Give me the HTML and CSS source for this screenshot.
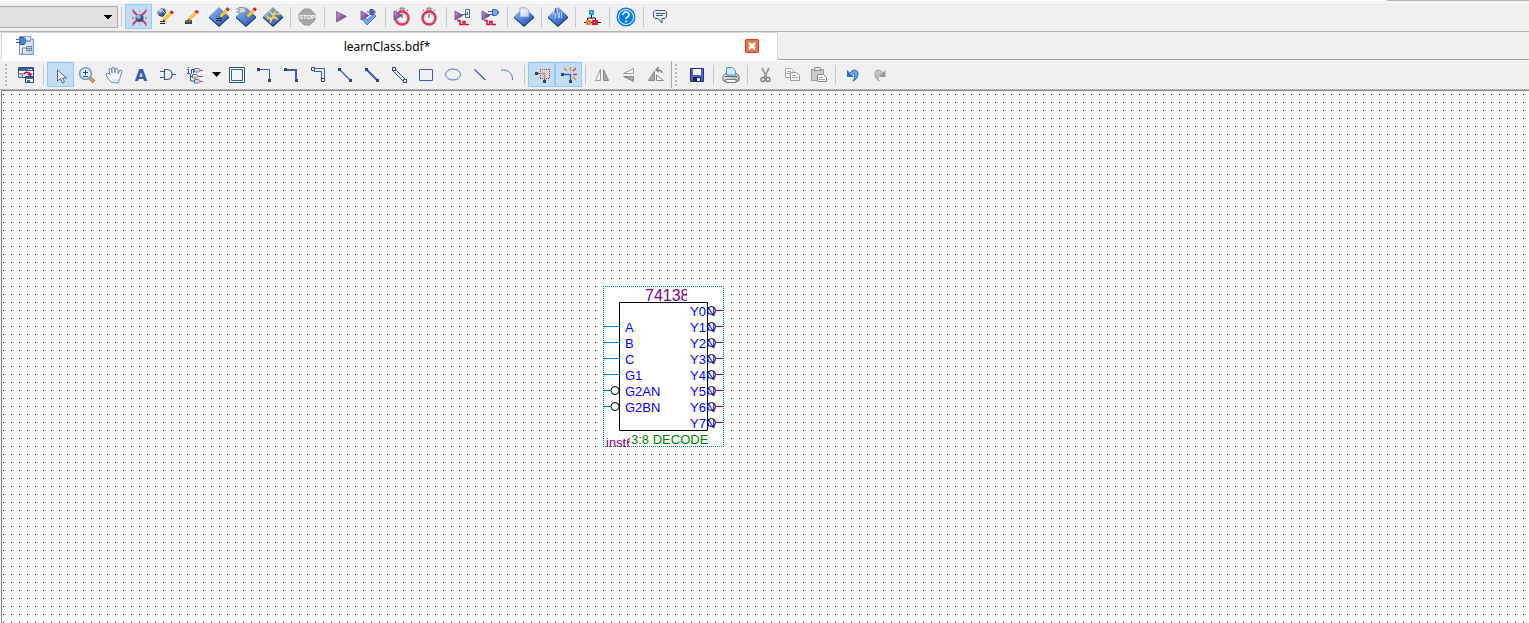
FILE: index.html
```html
<!DOCTYPE html>
<html lang="en">
<head>
<meta charset="utf-8">
<title>learnClass.bdf</title>
<link rel="stylesheet" href="styles.css">
</head>
<body>
<svg class="defs" aria-hidden="true">
  <defs>
    <linearGradient id="blue" x1="0" y1="0" x2="1" y2="1"><stop offset="0" stop-color="#9cc6f8"/><stop offset=".5" stop-color="#5288dc"/><stop offset="1" stop-color="#1f459c"/></linearGradient>
    <linearGradient id="purple" x1="0" y1="0" x2="1" y2="1"><stop offset="0" stop-color="#c9a0dc"/><stop offset="1" stop-color="#5a1a78"/></linearGradient>
    <linearGradient id="paper" x1="0" y1="0" x2="1" y2="1"><stop offset="0" stop-color="#fff"/><stop offset="1" stop-color="#b9cdee"/></linearGradient>
    <linearGradient id="grey" x1="0" y1="0" x2="1" y2="1"><stop offset="0" stop-color="#f4f4f4"/><stop offset="1" stop-color="#a4a4a4"/></linearGradient>
    <radialGradient id="ball" cx=".35" cy=".3"><stop offset="0" stop-color="#c4d8ee"/><stop offset=".6" stop-color="#6585b0"/><stop offset="1" stop-color="#324c74"/></radialGradient>
    <g id="diamond"><path d="M10 2 20 11v1L10 21 0 12v-1z" fill="#1c3474"/><path d="M10 1 20 10.500 10 19.500 0 10.500z" fill="url(#blue)"/></g>
    <g id="pencil"><path d="M0 10l1-3 6-6 2 2-6 6z" fill="#ffc72c" stroke="#d99a10" stroke-width=".4"/><path d="M7 1l1.500-1.500 2 2L9 3z" fill="#e3174d" stroke="#b01040" stroke-width=".7"/><path d="M0 10l.6-2 1.300 1.300z" fill="#333"/></g>
    <path id="play" d="M0 0 8 4.500 0 9z" fill="url(#purple)" stroke="#6b4c85" stroke-width=".8"/>
    <path id="wave" d="M4 14.500h3v4h3v-3h2v3h4" fill="none" stroke="#d3123f" stroke-width="1.500"/>
    <g id="watch"><path d="M8 2h4v3H8z" fill="#c4c4c4" stroke="#8c5a62" stroke-width=".8"/><path d="M4 5l1-1M16 5l-1-1" stroke="#8c5a62"/><circle cx="10" cy="12" r="6.500" fill="#fff" stroke="#e2365c" stroke-width="2.500"/><circle cx="10" cy="12" r="4.300" fill="none" stroke="#888" stroke-dasharray="1 1.400"/><path d="M10 12V8" stroke="#444"/></g>
  </defs>
</svg>
<div class="app">
  <div class="topline"></div>
  <div class="toolbar main" role="toolbar" aria-label="Main">
    <select class="combo" aria-label="Revision"><option></option></select>
    <span class="sep"></span>
    <button class="on" aria-label="Settings"><svg viewBox="0 0 21 21"><path d="M5 5l13 13M18 5 5 18" stroke="#e8325c" stroke-width="2"/><path d="M4 4h2M17 4h2M4 19h2M17 19h2M11 5h1M4 12h2M17 12h2M11 18h1" stroke="#b34468"/><circle cx="11.500" cy="12" r="4" fill="url(#ball)"/></svg></button>
    <button aria-label="Assignment editor"><svg viewBox="0 0 21 21"><path d="M6 2l4 1 1 4-3 4-4-1-2-4z" fill="url(#ball)"/><path d="M2 4h5l3 3" fill="none" stroke="#d4e4f5"/><use href="#pencil" x="8" y="5"/><path d="M5 15.500h5M5 17.500h5" stroke="#222"/></svg></button>
    <button aria-label="Pin planner"><svg viewBox="0 0 21 21"><use href="#pencil" x="6" y="4.500"/><path d="M4 14h6v4H3v-3z" fill="#454545"/><path d="M4 15h5" stroke="#999"/></svg></button>
    <button aria-label="Edit assignments"><svg viewBox="0 0 21 21"><use href="#diamond"/><use href="#pencil" x="10" y="2"/><path d="M7 12.500h6M7 14.500h6" stroke="#102654"/></svg></button>
    <button aria-label="Edit netlist"><svg viewBox="0 0 21 21"><use href="#diamond"/><path d="M0 3h3M0 6h3M3 1.500h4c3.500 0 3.500 5.500 0 5.500H3zM9 4h2" fill="#d8d8d8" stroke="#8b929e"/><use href="#pencil" x="10" y="2"/></svg></button>
    <button aria-label="Chip planner"><svg viewBox="0 0 21 21"><use href="#diamond"/><path d="M6 5l9 9M13 4 7 17M3 9l5 5M8 8h9M4 12h10" stroke="#ffcf45" stroke-width="1.500"/></svg></button>
    <span class="sep"></span>
    <button aria-label="Stop"><svg viewBox="0 0 21 21"><path d="M7 3h6l5 5v6l-5 5H7l-5-5V8z" fill="#a6a6a6" stroke="#999"/><text x="10" y="13" class="stop">STOP</text></svg></button>
    <span class="sep"></span>
    <button aria-label="Start compilation"><svg viewBox="0 0 21 21"><path d="M5.500 5.500 15.500 10.500 5.500 16z" fill="url(#purple)" stroke="#80718e"/></svg></button>
    <button aria-label="Start analysis"><svg viewBox="0 0 21 21"><path d="M4 13l3-2 2 3 7-6 2 2-9 9z" fill="#6fa8f2" stroke="#2d61b7" stroke-width=".8"/><use href="#play" x="3" y="5"/><path d="M9 6h9" stroke="#34528d"/><path d="M12 3.500h3l1 1v3l-1 1h-3z" fill="#4a70b4" stroke="#34528d"/></svg></button>
    <span class="sep"></span>
    <button aria-label="Timing analysis"><svg viewBox="0 0 21 21"><use href="#watch"/><use href="#play" x="2" y="5"/></svg></button>
    <button aria-label="Timing analyzer"><svg viewBox="0 0 21 21"><use href="#watch"/></svg></button>
    <span class="sep"></span>
    <button aria-label="RTL simulation"><svg viewBox="0 0 21 21"><use href="#wave"/><use href="#play" x="2" y="5"/><path d="M12.500 3.500h4v8h-4zM9 8.500h6M14.500 6v3" fill="#eef2f8" stroke="#50617c"/></svg></button>
    <button aria-label="Gate simulation"><svg viewBox="0 0 21 21"><use href="#wave"/><use href="#play" x="2" y="5"/><path d="M8 5.500h4M8 8.500h4M12.500 3.500h2c3 0 4 2 4 3s-1 3-4 3h-2zM17 6.500h2" fill="#79a8ee" stroke="#315ca7"/></svg></button>
    <span class="sep"></span>
    <button aria-label="Programmer"><svg viewBox="0 0 21 21"><use href="#diamond"/><path d="M6 2h6l3 3v6H6z" fill="url(#paper)" stroke="#7f93b2" stroke-width=".7"/></svg></button>
    <span class="sep"></span>
    <button aria-label="Report"><svg viewBox="0 0 21 21"><use href="#diamond"/><path d="M5.500 3v5h2v4M9.500 3v5h1v4M13.500 6v6M11.500 6v6" fill="none" stroke="#c3d8fa" stroke-width=".8"/><path d="M7.500 2v5" stroke="#9d4379"/></svg></button>
    <span class="sep"></span>
    <button aria-label="System builder"><svg viewBox="0 0 21 21"><path d="M9.500 9v3M5.500 14v-2h8v2M2 16.500h17" fill="none" stroke="#111"/><path d="M7 4h5v5H7z" fill="#18a5dc"/><path d="M4 14h5v5H4z" fill="#f58223"/><path d="M10 14h6v5h-6z" fill="#ed1742"/><path d="M9 6.500h1M6 16.500h1M12 16.500h1" stroke="#fff"/></svg></button>
    <span class="sep"></span>
    <button aria-label="Help"><svg viewBox="0 0 21 21"><circle cx="10" cy="11" r="9.500" fill="#087cf4"/><circle cx="10" cy="11" r="7.500" fill="none" stroke="#fff"/><path d="M7 9c0-4 6-4 6 0 0 2-3 2-3 4" fill="none" stroke="#fff" stroke-width="1.700"/><path d="M9.200 14.500h1.700v1.700H9.200z" fill="#fff"/></svg></button>
    <span class="sep"></span>
    <button aria-label="Feedback"><svg viewBox="0 0 21 21"><path d="M5 4.500h10l1.500 1.500v5L15 12.500h-3V17l-4-4.500H5L3.500 11V6z" fill="#e4edf8" stroke="#41566f"/><path d="M6 7.500h9M6 9.500h7" stroke="#41566f"/></svg></button>
  </div>

  <div class="tabs">
    <div class="tab">
      <svg class="file" viewBox="0 0 20 21" aria-hidden="true"><path d="M4.500 1.500h11l3 3v15h-14z" fill="url(#paper)" stroke="#7e98c5"/><path d="M15.500 1.500v3h3" fill="#fff" stroke="#7e98c5"/><path d="M1 4.500h4M1 7.500h4M12 6h4" stroke="#416497"/><path d="M5 2.500h3c4 0 4 7 0 7H5z" fill="#4e86d4" stroke="#2a5ba6"/><path d="M11.500 11.500h5v4h-5zM14 11v5M11 13.500h6M7.500 19v-6h3" fill="#fff" stroke="#6681a8"/></svg>
      <span class="name">learnClass.bdf*</span>
      <button class="close" aria-label="Close"><svg viewBox="0 0 14 14"><rect x=".5" y=".5" width="13" height="13" rx="1" fill="#e2764f" stroke="#d2392a"/><path d="M4 4l6 6M10 4l-6 6" stroke="#fff" stroke-width="2.500"/></svg></button>
    </div>
    <div class="rest"></div>
  </div>

  <div class="toolbar edit" role="toolbar" aria-label="Drawing">
    <span class="grip"></span>
    <button aria-label="Detach window"><svg viewBox="0 0 21 21"><path d="M2.500 3.500h15v10h-15z" fill="#fff" stroke="#31486f"/><path d="M3 4h14v3H3z" fill="#3d5fa6"/><path d="M12 5.500h1M14 5.500h2" stroke="#fff"/><path d="M8 10.500c0-3 6-3 6 0" fill="none" stroke="#d01440" stroke-width="1.500"/><path d="M11 9.500h6l-3 3.500z" fill="#d01440"/><path d="M2.500 9.500h4v4h-4z" fill="#cad5e5" stroke="#657993"/><path d="M9.500 12.500h8v6h-8z" fill="#fff" stroke="#28446f"/><path d="M10 14h7" stroke="#4868aa" stroke-width="2"/><path d="M11 17h3" stroke="#4868aa" stroke-width="2"/></svg></button>
    <span class="sep"></span>
    <button class="on" aria-label="Select"><svg viewBox="0 0 21 21"><path d="M7.500 6v11l3-2.500 2 4.500 2-1-2-4h4z" fill="#f5f9ff" stroke="#4f6279"/></svg></button>
    <button aria-label="Zoom"><svg viewBox="0 0 21 21"><path d="M12 13l5 5" stroke="#a96a32" stroke-width="3.500"/><path d="M12.500 13.500l4 4" stroke="#e5b477" stroke-width="1.500"/><circle cx="8.500" cy="9.500" r="5.800" fill="#e2effc" stroke="#779bc8" stroke-width="1.600"/><path d="M6 8.500h5M8.500 6v5M6 12.500h5" stroke="#264b9c"/></svg></button>
    <button aria-label="Pan"><svg viewBox="0 0 21 21"><path d="M7 18l-4-5-1-3 2-1 2 2-1-6 2-1 1 5V4l2-1 1 6 1-5 2 1v5l2-4 2 1-2 7-2 5z" fill="#f9fcff" stroke="#6c89b5"/><path d="M8 16h6" stroke="#b4c8e2"/></svg></button>
    <button aria-label="Text"><svg viewBox="0 0 21 21"><text x="10" y="17" class="letter">A</text></svg></button>
    <button aria-label="Symbol"><svg viewBox="0 0 21 21"><path d="M2 7.500h4M2 13.500h4M14 10.500h4M6.500 5.500h3c6 0 6 10 0 10h-3z" fill="none" stroke="#3355a4" stroke-width="1.200"/></svg></button>
    <button aria-label="Pin"><svg viewBox="0 0 21 21"><path d="M3.500 3v1M2 5.500h1.500V9M2 9.500h3M6.500 10V5.500h2V9M5.500 10v7H9M5.500 12.500H8" fill="none" stroke="#3152a5"/><path d="M14 6.500h4M12 12.500h6M14 17.500h4" stroke="#f03434"/><path d="M9.500 4.500h4l2 1.500-2 2h-4zM7.500 10.500h4l2 1.500-2 2h-4zM9.500 15.500h4l2 1.500-2 2h-4z" fill="#d5dbe2" stroke="#66758a"/></svg></button>
    <button class="drop" aria-label="Pin options"><svg viewBox="0 0 9 5"><path d="M0 0h9L4.500 5z"/></svg></button>
    <button aria-label="Block"><svg viewBox="0 0 21 21"><path d="M2.500 3.500h15v15h-15z" fill="#fff" stroke="#304c78"/><path d="M4.500 5.500h11v11h-11z" fill="#eef4ff" stroke="#3559b5"/></svg></button>
    <button aria-label="Orthogonal node"><svg viewBox="0 0 21 21"><path d="M4 5.500h11.500V17" fill="none" stroke="#3a5db8"/><path d="M3 4h3v3H3zM14 15h3v3h-3z" fill="#2b4867"/></svg></button>
    <button aria-label="Orthogonal bus"><svg viewBox="0 0 21 21"><path d="M4 6h11v11" fill="none" stroke="#3a5db8" stroke-width="2"/><path d="M3 4h3v3H3zM14 15h3v3h-3z" fill="#2b4867"/></svg></button>
    <button aria-label="Orthogonal conduit"><svg viewBox="0 0 21 21"><path d="M6 4.500h10.500V15M6 7.500h7.500V15" fill="none" stroke="#3a5db8"/><path d="M3.500 3.500h3v3h-3zM13.500 14.500h3v3h-3z" fill="#fff" stroke="#2b4867"/></svg></button>
    <button aria-label="Diagonal node"><svg viewBox="0 0 21 21"><path d="M4 5l12 12" stroke="#3a5db8" stroke-width="1.300"/><path d="M3 4h3v3H3zM14 15h3v3h-3z" fill="#2b4867"/></svg></button>
    <button aria-label="Diagonal bus"><svg viewBox="0 0 21 21"><path d="M4 5l12 12" stroke="#3a5db8" stroke-width="2.200"/><path d="M3 4h3v3H3zM14 15h3v3h-3z" fill="#2b4867"/></svg></button>
    <button aria-label="Diagonal conduit"><svg viewBox="0 0 21 21"><path d="M6 5l11 11M4 7l11 11" stroke="#3a5db8"/><path d="M3.500 3.500h3v3h-3zM14.500 15.500h3v3h-3z" fill="#fff" stroke="#2b4867"/></svg></button>
    <button aria-label="Rectangle"><svg viewBox="0 0 21 21"><path d="M3.500 5.500h13v11h-13z" fill="none" stroke="#3a5db8"/></svg></button>
    <button aria-label="Oval"><svg viewBox="0 0 21 21"><ellipse cx="10" cy="10.500" rx="7.500" ry="5.500" fill="none" stroke="#5573bf"/></svg></button>
    <button aria-label="Line"><svg viewBox="0 0 21 21"><path d="M4.500 5.500l11 10.500" stroke="#3a5db8" stroke-width="1.300"/></svg></button>
    <button aria-label="Arc"><svg viewBox="0 0 21 21"><path d="M4 6c7-1 12 4 11.500 10" fill="none" stroke="#5573bf"/></svg></button>
    <span class="sep"></span>
    <button class="on" aria-label="Partial line selection"><svg viewBox="0 0 21 21"><path d="M9 5.500h10M9 14.500h10M9.500 5v10M18.500 5v10" fill="none" stroke="#c52350" stroke-dasharray="1 1"/><path d="M7 9.500h2" stroke="#3a5db8"/><path d="M9 9.500h4.500V14" fill="none" stroke="#f28a14" stroke-width="1.500"/><path d="M13.500 14v3" stroke="#3a5db8"/><path d="M4 8h3v3H4zM12 16h3v3h-3z" fill="#2b4867"/></svg></button>
    <button class="on" aria-label="Rubberbanding"><svg viewBox="0 0 21 21"><path d="M5 10.500h7.500V17" fill="none" stroke="#3a5db8" stroke-width="1.300"/><path d="M3 9h3v3H3zM11 16h3v3h-3z" fill="#2b4867"/><path d="M6 4l3 3M12.500 3v4M15 13l3 3" stroke="#f28a14" stroke-width="1.500"/><path d="M18 4l-3 3M15 10.500h4" stroke="#ea3640" stroke-width="1.500"/></svg></button>
    <span class="sep"></span>
    <button aria-label="Flip horizontal"><svg viewBox="0 0 21 21"><path d="M8.500 5.500v11h-5z" fill="#fafafa" stroke="#999"/><path d="M11.500 5.500v11h5z" fill="#aaa" stroke="#888"/></svg></button>
    <button aria-label="Flip vertical"><svg viewBox="0 0 21 21"><path d="M14.500 4.500v5h-10z" fill="#fafafa" stroke="#999"/><path d="M14.500 17.500v-5h-10z" fill="#aaa" stroke="#888"/></svg></button>
    <button aria-label="Rotate"><svg viewBox="0 0 21 21"><path d="M8.500 7v9.500h-6z" fill="#aaa" stroke="#888"/><path d="M10.500 11v5.500h7z" fill="#fafafa" stroke="#888"/><path d="M16 9c0-3-3-3-5-3m2-3-3 3 3 2" fill="none" stroke="#888" stroke-width="1.500"/></svg></button>
    <span class="divider"></span>
    <span class="grip"></span>
    <button aria-label="Save"><svg viewBox="0 0 21 21"><path d="M4.500 4.500h13v13h-13z" fill="#5660c5" stroke="#282f8a"/><path d="M7 5h8v6H7z" fill="#f7f9ff"/><path d="M7 13h8v4H7z" fill="#1b2258"/><path d="M11 14h3v3h-3z" fill="#dce4f4"/></svg></button>
    <span class="sep"></span>
    <button aria-label="Print"><svg viewBox="0 0 21 21"><path d="M5 9.500h12l2 3v4l-2 1H5l-2-1v-4z" fill="url(#grey)" stroke="#606b78"/><path d="M6.500 11V3.500h6l3 3V11z" fill="#cde8ff" stroke="#5593ce"/><path d="M5 12.500h12" stroke="#5e6673"/><path d="M6 15.500h10v3H6z" fill="#fff" stroke="#6f7986"/></svg></button>
    <span class="sep"></span>
    <button aria-label="Cut"><svg viewBox="0 0 21 21"><path d="M8 4l5 10M15 4l-5 10" stroke="#999" stroke-width="1.700"/><circle cx="9" cy="15.500" r="2" fill="none" stroke="#777" stroke-width="1.300"/><circle cx="14" cy="15.500" r="2" fill="none" stroke="#777" stroke-width="1.300"/></svg></button>
    <button aria-label="Copy"><svg viewBox="0 0 21 21"><path d="M4.500 4.500h6l2 2v7h-8z" fill="#f8f8f8" stroke="#aaa"/><path d="M9.500 8.500h6l3 3v5h-9z" fill="#f4f4f4" stroke="#999"/><path d="M6 7.500h4M6 9.500h3M11 11.500h4M11 13.500h6" stroke="#aaa"/></svg></button>
    <button aria-label="Paste"><svg viewBox="0 0 21 21"><path d="M3.500 5.500h12v11h-12z" fill="#ccc" stroke="#999"/><path d="M7 3.500h5l1 3H6z" fill="#eee" stroke="#888"/><path d="M9.500 10.500h6l3 3v4h-9z" fill="#fafafa" stroke="#888"/><path d="M11 13.500h4M11 15.500h6" stroke="#aaa"/></svg></button>
    <span class="sep"></span>
    <button aria-label="Undo"><svg viewBox="0 0 21 21"><path d="M8 9c4-5 8-3 8 1 0 3-2 6-5 7 2-3 3-8-1-7" fill="#6ba0ed" stroke="#2d63c0"/><path d="M5 6v7h7z" fill="#3268d3"/></svg></button>
    <button aria-label="Redo"><svg viewBox="0 0 21 21"><path d="M14 9c-4-5-8-3-8 1 0 3 2 6 4 7-2-4-1-7 2-7" fill="#c8c8c8" stroke="#999"/><path d="M16.500 6v7h-7z" fill="#999"/></svg></button>
  </div>

  <main class="canvas">
    <svg class="part" width="121" height="162" viewBox="0 0 121 162" role="img" aria-label="74138 decoder">
      <defs><clipPath id="title"><path d="M0 0h84v20H0z"/></clipPath><clipPath id="out"><path d="M80 16h32v130H80z"/></clipPath><clipPath id="inst"><path d="M0 140h27v22H0z"/></clipPath></defs>
      <path d="M0 0h121v161H0z" fill="#fff"/>
      <path d="M0 .5h121M120.500 0v161M0 160.500h121M.5 0v161" class="bounds"/>
      <text x="42" y="15" class="title" clip-path="url(#title)">74138</text>
      <path d="M16.500 16.500h88v128h-88z" class="body"/>
      <path d="M1 40.500h15M1 56.500h15M1 72.500h15M1 88.500h15M1 104.500h7M1 120.500h7" class="in"/>
      <path d="M113 24.500h7M113 40.500h7M113 56.500h7M113 72.500h7M113 88.500h7M113 104.500h7M113 120.500h7M113 136.500h7" class="outline"/>
      <g class="bubble"><circle cx="12" cy="104.500" r="4"/><circle cx="12" cy="120.500" r="4"/><circle cx="108.500" cy="24.500" r="4"/><circle cx="108.500" cy="40.500" r="4"/><circle cx="108.500" cy="56.500" r="4"/><circle cx="108.500" cy="72.500" r="4"/><circle cx="108.500" cy="88.500" r="4"/><circle cx="108.500" cy="104.500" r="4"/><circle cx="108.500" cy="120.500" r="4"/><circle cx="108.500" cy="136.500" r="4"/></g>
      <g class="port"><text x="22" y="46">A</text><text x="22" y="62">B</text><text x="22" y="78">C</text><text x="22" y="94">G1</text><text x="22" y="110">G2AN</text><text x="22" y="126">G2BN</text></g>
      <g class="port" clip-path="url(#out)"><text x="87" y="30">Y0N</text><text x="87" y="46">Y1N</text><text x="87" y="62">Y2N</text><text x="87" y="78">Y3N</text><text x="87" y="94">Y4N</text><text x="87" y="110">Y5N</text><text x="87" y="126">Y6N</text><text x="87" y="142">Y7N</text></g>
      <text x="28" y="158" class="kind">3:8 DECODE</text>
      <text x="3" y="161" class="inst" clip-path="url(#inst)">inst6</text>
    </svg>
  </main>
</div>
</body>
</html>
```

FILE: styles.css
```css
* { box-sizing: border-box; }
body { margin: 0; background: #fff; font-family: "Noto Sans", "Open Sans", sans-serif; font-size: 12px; color: #000; }
.defs { position: absolute; width: 0; height: 0; }
.app { display: flex; flex-direction: column; height: 100vh; overflow: hidden; }
.topline { flex: none; height: 3px; background: linear-gradient(#b4b4b4, #b4b4b4) right top / 142px 1px no-repeat, linear-gradient(#fff 1px, #f0f0f0 1px, #f0f0f0 2px, #fff 2px); }
.toolbar { display: flex; flex: none; align-items: center; padding-bottom: 1px; background: #f0f0f0; }
.main { height: 29px; border-bottom: 1px solid #b4b4b4; }
.edit { height: 30px; border-top: 1px solid #fff; border-bottom: 1px solid #b4b4b4; padding-left: 2px; }
button { display: flex; flex: none; align-items: center; justify-content: center; width: 27px; height: 25px; padding: 0; border: 1px solid transparent; background: none; }
button svg { flex: none; width: 21px; height: 21px; }
button.on { background: #c2dcf2; border-color: #90c8f6; }
.sep { flex: none; width: 7px; height: 20px; background: linear-gradient(#c8c8c8, #c8c8c8) center / 1px 100% no-repeat; }
.combo { flex: none; width: 118px; height: 22px; appearance: none; border: 1px solid #acacac; border-left: 0; border-radius: 0; background: conic-gradient(from -45deg at 50% 100%, #000 90deg, #e1e1e1 0) 104px 8px / 8px 4px no-repeat #e1e1e1; }
.tabs { display: flex; flex: none; height: 28px; background: #f0f0f0; padding-left: 1px; }
.tab { display: grid; grid-template-columns: 1fr auto 1fr; align-items: center; width: 51%; max-width: 777px; padding: 0 18px 2px 13px; background: #fff; border: 1px solid #d9d9d9; border-bottom: 0; }
.file { width: 20px; height: 21px; }
.name { padding-top: 2px; line-height: 16px; }
.close { justify-self: end; width: 14px; height: 14px; border: 0; }
.close svg { width: 14px; height: 14px; }
.rest { flex: 1; border-bottom: 1px solid #a0a0a0; }
.grip { flex: none; width: 2px; height: 22px; margin: 0 6px 0 3px; background: linear-gradient(#b8b8b8 2px, transparent 2px) 0 0 / 2px 4px; }
.drop { width: 15px; }
.drop svg { width: 9px; height: 5px; }
.divider { flex: none; align-self: stretch; width: 1px; margin-left: 1px; background: #a8a8a8; }
.stop { font: bold 6px "Liberation Sans", sans-serif; fill: #fff; text-anchor: middle; }
.letter { font: bold 16px "DejaVu Sans", sans-serif; fill: #3659b2; text-anchor: middle; }
.canvas { position: relative; flex: 1; margin-left: 1px; border-left: 1px solid #83838b; border-top: 1px solid #83838b; background: linear-gradient(90deg, transparent 1px, #fff 1px) 1px 3px / 8px 8px, linear-gradient(#000 1px, #fff 1px) 1px 3px / 8px 8px; }
.part { position: absolute; left: 601px; top: 195px; font-family: "Liberation Sans", Arial, sans-serif; font-size: 13px; }
.bounds { fill: none; stroke: #008080; stroke-dasharray: 1 1; }
.body { fill: #fff; stroke: #000; }
.in { stroke: #0080ff; }
.outline { stroke: #8000ff; }
.bubble { fill: none; stroke: #000; }
.port { fill: #00f; }
.title { font-size: 16px; fill: #800080; }
.kind { fill: #008000; }
.inst { fill: #800080; }
```
